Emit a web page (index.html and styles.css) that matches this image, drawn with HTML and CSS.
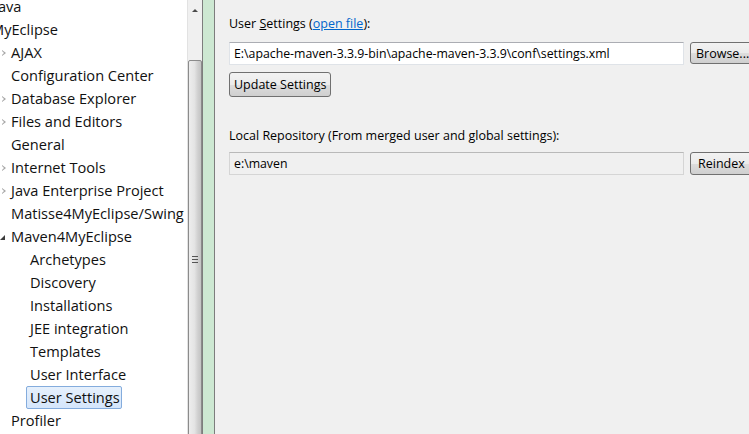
FILE: index.html
```html
<!DOCTYPE html>
<html lang="en">
<head>
  <meta charset="UTF-8" />
  <meta name="viewport" content="width=device-width, initial-scale=1.0" />
  <title>Preferences - Maven4MyEclipse - User Settings</title>
  <link rel="stylesheet" href="styles.css">
</head>
<body>
  <div class="window">
    <div class="tree">
      <ul class="nodes">
        <li class="node lvl1 java">Java</li>
        <li class="node lvl1">MyEclipse</li>
        <li class="node lvl2 closed">AJAX</li>
        <li class="node lvl2">Configuration Center</li>
        <li class="node lvl2 closed">Database Explorer</li>
        <li class="node lvl2 closed">Files and Editors</li>
        <li class="node lvl2">General</li>
        <li class="node lvl2 closed">Internet Tools</li>
        <li class="node lvl2 closed">Java Enterprise Project</li>
        <li class="node lvl2">Matisse4MyEclipse/Swing</li>
        <li class="node lvl2 open">Maven4MyEclipse</li>
        <li class="node lvl3">Archetypes</li>
        <li class="node lvl3">Discovery</li>
        <li class="node lvl3">Installations</li>
        <li class="node lvl3">JEE integration</li>
        <li class="node lvl3">Templates</li>
        <li class="node lvl3">User Interface</li>
        <li class="node lvl3"><span class="selected">User Settings</span></li>
        <li class="node lvl2">Profiler</li>
      </ul>
    </div>

    <div class="scrollbar">
      <span class="arrow-up"></span>
      <div class="thumb">
        <span class="grip"></span>
      </div>
    </div>

    <div class="sash"></div>

    <div class="prefs">
      <label class="field-label">User <u>S</u>ettings (<a href="#">open file</a>):</label>
      <div class="field-row">
        <input class="text-field" type="text" value="E:\apache-maven-3.3.9-bin\apache-maven-3.3.9\conf\settings.xml" />
        <button class="btn btn-side">Browse...</button>
      </div>
      <button class="btn btn-update">Update Settings</button>

      <label class="field-label repo-label">Local Repository (From merged user and global settings):</label>
      <div class="field-row repo-row">
        <input class="text-field readonly" type="text" value="e:\maven" readonly />
        <button class="btn btn-side">Reindex</button>
      </div>
    </div>
  </div>
</body>
</html>
```

FILE: styles.css
```css
body {
  margin: 0;
  padding: 0;
  font-family: "Open Sans", "Noto Sans", sans-serif;
  background-color: #f0f0f0;
  overflow: hidden;
}

.window {
  display: flex;
  width: 749px;
  height: 434px;
  overflow: hidden;
}

/* left tree */
.tree {
  width: 187px;
  flex-shrink: 0;
  background-color: #fff;
  overflow: hidden;
}

.nodes {
  list-style: none;
  margin: -5px 0 0 -9px;
  padding: 0;
}

.node {
  position: relative;
  height: 23px;
  line-height: 23px;
  font-size: 14.6px;
  color: #111;
  white-space: nowrap;
}

.lvl1 { padding-left: 0; }
.lvl2 { padding-left: 20px; }
.lvl3 { padding-left: 39px; }

.java { padding-left: 3px; } /* tree is scrolled a little to the right */

/* expand / collapse arrows */
.closed::before {
  content: "";
  position: absolute;
  left: 11px;
  top: 9px;
  border-left: 4px solid #a6a6a6;
  border-top: 3px solid transparent;
  border-bottom: 3px solid transparent;
}

.closed::after {
  content: "";
  position: absolute;
  left: 11px;
  top: 10px;
  border-left: 2px solid #fff;
  border-top: 2px solid transparent;
  border-bottom: 2px solid transparent;
}

.open::before {
  content: "";
  position: absolute;
  left: 9px;
  top: 10px;
  border-right: 5px solid #3c3c3c;
  border-top: 5px solid transparent;
}

.selected {
  display: inline-block;
  margin-left: -4px;
  padding: 0 1px 0 3px;
  height: 21px;
  line-height: 21px;
  border: 1px solid #84acdd;
  border-radius: 2px;
  background: linear-gradient(#e6f0fc, #d5e6fb);
}

/* vertical scrollbar */
.scrollbar {
  position: relative;
  width: 14px;
  flex-shrink: 0;
  background-color: #f0f0f0;
  border-left: 1px solid #e2e2e2;
}

.arrow-up {
  position: absolute;
  left: 4px;
  top: 9px;
  border-bottom: 3px solid #4a4a4a;
  border-left: 3px solid transparent;
  border-right: 3px solid transparent;
}

.thumb {
  position: absolute;
  left: 0;
  right: 0;
  top: 60px;
  bottom: -4px;
  border: 1px solid #8b8b8b;
  border-radius: 2px;
  background: linear-gradient(to right, #ededed, #e4e4e4 45%, #cfcfcf 75%, #c4c4c4);
}

.grip {
  position: absolute;
  left: 3px;
  top: 195px;
  width: 6px;
  height: 7px;
  background: repeating-linear-gradient(#555 0, #555 1px, transparent 1px, transparent 3px);
}

/* divider between tree and page */
.sash {
  width: 11px;
  flex-shrink: 0;
  background-color: #cde8d2;
  border-left: 1px solid #7d7d7d;
  border-right: 1px solid #7d7d7d;
}

/* preference page */
.prefs {
  flex: 1;
  padding: 14px 0 0 14px;
  font-size: 12.5px;
  color: #000;
  overflow: hidden;
}

.field-label {
  display: block;
  height: 20px;
  line-height: 20px;
  white-space: nowrap;
}

.field-label a {
  color: #0066cc;
}

.field-row {
  display: flex;
  gap: 6px;
  margin-top: 8px;
  width: 540px;
}

.text-field {
  width: 455px;
  height: 23px;
  box-sizing: border-box;
  flex-shrink: 0;
  margin: 0;
  padding: 0 4px;
  font-family: inherit;
  font-size: 12.3px;
  color: #000;
  border: 1px solid #dfe3e8;
  border-top-color: #abadb3;
  background-color: #fff;
  outline: none;
}

.text-field.readonly {
  background-color: #f0f0f0;
  border-color: #d5d5d5;
  border-top-color: #b9b9b9;
}

.btn {
  height: 22px;
  box-sizing: border-box;
  margin: 0;
  padding: 0 7px;
  font-family: inherit;
  font-size: 12.5px;
  color: #000;
  border: 1px solid #707070;
  border-radius: 3px;
  background: linear-gradient(#f2f2f2, #ebebeb 50%, #dddddd 51%, #cfcfcf);
  cursor: pointer;
}

.btn-side {
  width: 76px;
  flex-shrink: 0;
  padding: 0 5px;
  text-align: left;
}

.btn-update {
  display: block;
  height: 25px;
  margin-top: 7px;
  padding: 0 4px;
}

.repo-label {
  margin-top: 29px;
}

.repo-row {
  margin-top: 6px;
}

.repo-row .btn-side {
  height: 23px;
  padding: 0 7px;
}
```
